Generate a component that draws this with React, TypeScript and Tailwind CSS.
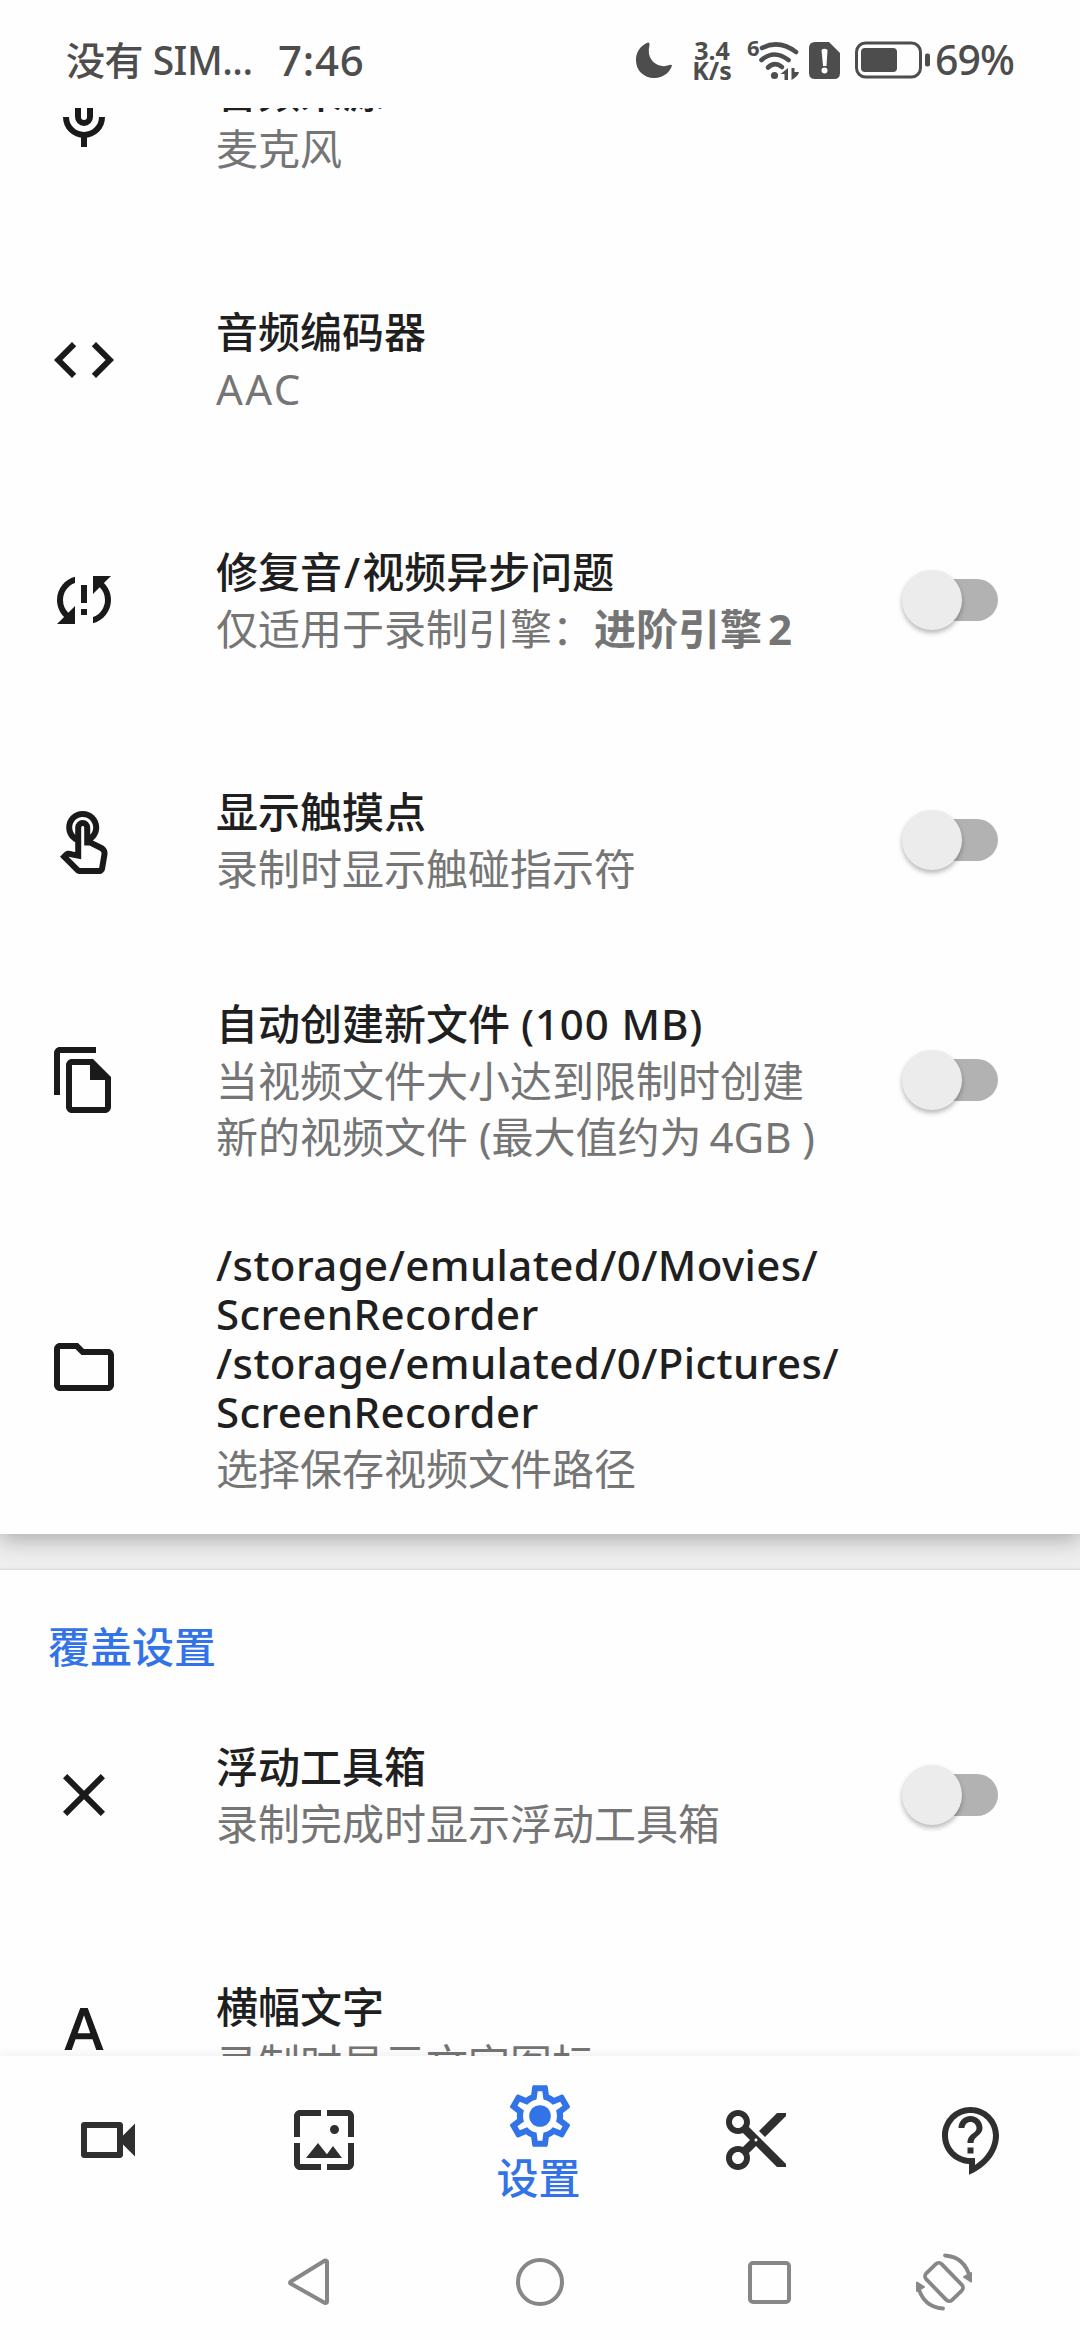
import type { ReactNode } from "react";
import {
  MdClose,
  MdCode,
  MdContentCut,
  MdFormatColorText,
  MdOutlineContactSupport,
  MdOutlineFileCopy,
  MdOutlineFolder,
  MdOutlineTouchApp,
  MdOutlineVideocam,
  MdSyncProblem,
  MdWallpaper,
} from "react-icons/md";

function StatusBar() {
  return (
    <header className="relative z-10 flex h-[108px] shrink-0 items-center bg-[#fefefe] pt-3 pl-[66px] text-[#4d4d4d]">
      <span className="w-[212px] text-[39px] leading-[44px] font-medium tracking-[-0.5px] whitespace-nowrap">没有 SIM...</span>
      <span className="w-[358px] text-[42px] leading-[44px] font-medium tracking-[0.8px] whitespace-nowrap">7:46</span>
      <svg className="h-[36px] w-[36px]" viewBox="0 0 36 36" fill="currentColor">
        <path d="M12.500 .5C11.200 .6 0 5 0 18.500C0 28.500 8 36 18 36C29 36 34.500 28.500 36 23.500C35.500 22.500 34.500 22.500 33.500 23C24 27 12 20 12.800 8C13 4.500 14.500 1.500 12.500 .5Z" />
      </svg>
      <span className="ml-5 flex w-[40px] flex-col text-center text-[25px] leading-[20px] font-bold">
        <span>3.4</span>
        <span>K/s</span>
      </span>
      <svg className="ml-[15px] h-[42px] w-[54px] overflow-visible" viewBox="0 0 54 42" fill="none" stroke="currentColor" strokeWidth="4.600" strokeLinecap="round">
        <text x="0" y="17" fontSize="22" fontWeight="700" fill="currentColor" stroke="none">6</text>
        <path d="M15 9Q32 0 49 13" />
        <path d="M14.500 21Q27 10 41.500 21" />
        <path d="M21 28.500Q27.500 22 35 28" />
        <circle cx="27.500" cy="36.500" r="3.600" fill="currentColor" stroke="none" />
        <path d="M41 29v12h-3.500v-6H33.500zM44.500 41V29h3l0 4h4.500q-.5 4-7.500 8z" fill="currentColor" stroke="none" />
      </svg>
      <svg className="ml-[8px] h-[37px] w-[31px]" viewBox="0 0 31 37">
        <path d="M6 0H20L31 11V31Q31 37 25 37H6Q0 37 0 31V6Q0 0 6 0Z" fill="currentColor" />
        <path d="M12.500 8Q15.500 5.500 18.500 8L17.500 24H14Z" fill="#fefefe" />
        <circle cx="15.500" cy="28.500" r="3" fill="#fefefe" />
      </svg>
      <svg className="ml-[15px] h-[38px] w-[76px]" viewBox="0 0 76 38" fill="currentColor">
        <rect x="1.500" y="2" width="64" height="34" rx="9" fill="none" stroke="currentColor" strokeWidth="3" />
        <rect x="6" y="7" width="36" height="24" rx="4" />
        <rect x="70" y="12.500" width="5" height="13" rx="2" />
      </svg>
      <span className="ml-[4px] text-[41px] font-medium tracking-[-1px]">69%</span>
    </header>
  );
}

function MicIcon() {
  return (
    <svg className="size-[72px]" viewBox="0 0 24 24" fill="none" stroke="currentColor" strokeWidth="2">
      <rect x="10" y="3" width="4" height="10" rx="2" />
      <path d="M6 11a6 6 0 0 0 12 0M12 17v4" />
    </svg>
  );
}

function GearIcon() {
  return (
    <svg className="size-[74px]" viewBox="0 0 24 24" fill="currentColor">
      <path d="M10,22C9.75,22 9.54,21.82 9.5,21.58L9.13,18.93C8.5,18.68 7.96,18.34 7.44,17.94L4.95,18.95C4.73,19.03 4.46,18.95 4.34,18.73L2.34,15.27C2.21,15.05 2.27,14.78 2.46,14.63L4.57,12.97L4.5,12L4.57,11L2.46,9.37C2.27,9.22 2.21,8.95 2.34,8.73L4.34,5.27C4.46,5.05 4.73,4.96 4.95,5.05L7.44,6.05C7.96,5.66 8.5,5.32 9.13,5.07L9.5,2.42C9.54,2.18 9.75,2 10,2H14C14.25,2 14.46,2.18 14.5,2.42L14.87,5.07C15.5,5.32 16.04,5.66 16.56,6.05L19.05,5.05C19.27,4.96 19.54,5.05 19.66,5.27L21.66,8.73C21.79,8.95 21.73,9.22 21.54,9.37L19.43,11L19.5,12L19.43,13L21.54,14.63C21.73,14.78 21.79,15.05 21.66,15.27L19.66,18.73C19.54,18.95 19.27,19.04 19.05,18.95L16.56,17.95C16.04,18.34 15.5,18.68 14.87,18.93L14.5,21.58C14.46,21.82 14.25,22 14,22H10M11.25,4L10.88,6.61C9.68,6.86 8.62,7.5 7.85,8.39L5.44,7.35L4.69,8.65L6.8,10.2C6.4,11.37 6.4,12.64 6.8,13.8L4.68,15.36L5.43,16.66L7.86,15.62C8.63,16.5 9.68,17.14 10.87,17.38L11.24,20H12.76L13.13,17.39C14.32,17.14 15.37,16.5 16.14,15.62L18.57,16.66L19.32,15.36L17.2,13.81C17.6,12.64 17.6,11.37 17.2,10.2L19.31,8.65L18.56,7.35L16.15,8.39C15.38,7.5 14.32,6.86 13.12,6.62L12.75,4H11.25Z" />
      <circle cx="12" cy="12" r="3.500" />
    </svg>
  );
}

function Toggle() {
  return (
    <span className="mr-[82px] flex h-[42px] w-[92px] items-center rounded-full bg-[#b2b2b2]">
      <span className="-ml-1 size-[60px] shrink-0 rounded-full bg-[#ececec] shadow-[0_3px_5px_rgba(0,0,0,0.28)]" />
    </span>
  );
}

type RowProps = { icon: ReactNode; title: ReactNode; sub: ReactNode; toggle?: boolean; path?: boolean };

function Row({ icon, title, sub, toggle, path }: RowProps) {
  return (
    <div className={path ? "flex h-[334px] shrink-0 items-center" : "flex h-[240px] shrink-0 items-center"}>
      <span className="mr-24 ml-12 text-[72px] text-[#1a1a1a]">{icon}</span>
      <div className="flex-1 whitespace-nowrap">
        <div
          className={
            path
              ? "pt-[3px] pb-[5px] text-[42px] leading-[49px] font-medium tracking-[0.4px] text-[#1f1f1f]"
              : "-mt-px pb-px text-[42px] leading-[57px] font-medium text-[#1f1f1f]"
          }
        >
          {title}
        </div>
        <div className="text-[42px] leading-[56px] text-[#757575]">{sub}</div>
      </div>
      {toggle && <Toggle />}
    </div>
  );
}

function NavItem({ icon, label }: { icon: ReactNode; label?: string }) {
  return (
    <button className={label ? "flex w-[216px] flex-col items-center text-[#3273e8]" : "flex w-[216px] items-center justify-center text-[#2f2f2f]"}>
      <span className={label ? "mt-[23px]" : "text-[72px]"}>{icon}</span>
      {label && <span className="-ml-[3px] -mt-px text-[42px] leading-[52px] font-medium">{label}</span>}
    </button>
  );
}

function SystemNav() {
  return (
    <footer className="flex h-[116px] shrink-0 items-center bg-[#fefefe] pl-[286px] text-[#878787]">
      <svg className="h-[50px] w-[46px]" viewBox="0 0 46 50" fill="none" stroke="currentColor" strokeWidth="4" strokeLinejoin="round">
        <path d="M4.500 24.800L39 3.500Q41 3.500 41 5V44.500Q41 46 39 46L4.500 26.500Q3.500 25.600 4.500 24.800Z" />
      </svg>
      <span className="ml-[184px] size-[48px] rounded-full border-4 border-current" />
      <span className="ml-[184px] size-[43px] rounded-[5px] border-4 border-current" />
      <svg className="ml-[124px] size-[58px]" viewBox="0 0 58 58" fill="none" stroke="currentColor" strokeWidth="3.800" strokeLinecap="round">
        <rect x="18.200" y="10.500" width="21.600" height="37" rx="4" transform="rotate(-44 29 29)" />
        <path d="M30 2.500Q50 4 55 25" />
        <path d="M28 55.500Q8 54 3 33" />
        <path d="M49 24l7 4.500V20zM9 34L2 29.500V38z" fill="currentColor" strokeWidth="2" strokeLinejoin="round" />
      </svg>
    </footer>
  );
}

export default function App() {
  return (
    <div className="flex h-[2340px] w-[1080px] flex-col overflow-hidden bg-[#fefefe] font-['Noto_Sans','Noto_Sans_CJK_SC',sans-serif]">
      <StatusBar />
      <main className="flex h-[1948px] shrink-0 flex-col overflow-hidden bg-[#eeeeee]">
        <section className="-mt-[108px] flex shrink-0 flex-col bg-[#fefefe] shadow-[0_4px_22px_rgba(0,0,0,0.32)]">
          <Row icon={<MicIcon />} title="音频来源" sub="麦克风" />
          <Row icon={<MdCode />} title="音频编码器" sub={<span className="tracking-[2.4px]">AAC</span>} />
          <Row
            icon={<MdSyncProblem />}
            title={<>修复音<span className="px-[2px]">/</span>视频异步问题</>}
            sub={<>仅适用于录制引擎：<b>进阶引擎<span className="pl-1.5">2</span></b></>}
            toggle
          />
          <Row icon={<MdOutlineTouchApp className="mt-2" />} title="显示触摸点" sub="录制时显示触碰指示符" toggle />
          <Row
            icon={<MdOutlineFileCopy />}
            title={<>自动创建新文件 <span className="tracking-[0.9px]">(100 MB)</span></>}
            sub={<>当视频文件大小达到限制时创建<br />新的视频文件 (最大值约为<span className="pl-2">4GB )</span></>}
            toggle
          />
          <Row
            icon={<MdOutlineFolder />}
            title={<>/storage/emulated/0/Movies/<br />ScreenRecorder<br />/storage/emulated/0/Pictures/<br />ScreenRecorder</>}
            sub="选择保存视频文件路径"
            path
          />
        </section>
        <section className="mt-9 flex shrink-0 flex-col bg-[#fefefe] shadow-[0_0_3px_rgba(0,0,0,0.2)]">
          <h2 className="h-[105px] pt-[49px] pl-[48px] text-[42px] leading-[56px] font-medium text-[#3273e8]">覆盖设置</h2>
          <Row icon={<MdClose />} title="浮动工具箱" sub="录制完成时显示浮动工具箱" toggle />
          <Row icon={<MdFormatColorText />} title="横幅文字" sub="录制时显示文字图标" />
        </section>
      </main>
      <nav className="flex h-[168px] shrink-0 bg-[#fefefe] shadow-[0_0_12px_rgba(0,0,0,0.08)]">
        <NavItem icon={<MdOutlineVideocam />} />
        <NavItem icon={<MdWallpaper />} />
        <NavItem label="设置" icon={<GearIcon />} />
        <NavItem icon={<MdContentCut />} />
        <NavItem icon={<MdOutlineContactSupport />} />
      </nav>
      <SystemNav />
    </div>
  );
}
